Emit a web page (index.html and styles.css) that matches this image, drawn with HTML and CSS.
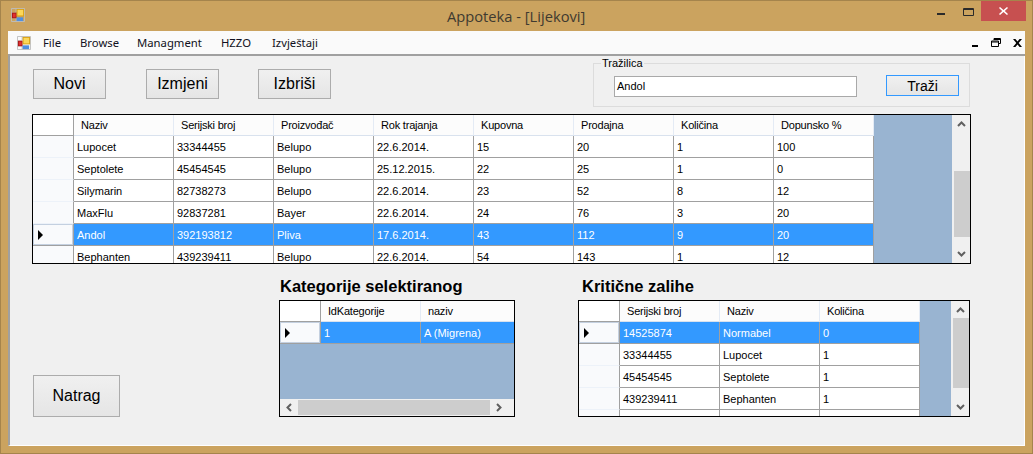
FILE: index.html
```html
<!DOCTYPE html>
<html lang="hr">
<head>
<meta charset="utf-8">
<title>Appoteka - [Lijekovi]</title>
<link rel="stylesheet" href="styles.css">
</head>
<body>
<div class="window">
  <header class="titlebar">
    <svg class="app-icon title-icon" width="14" height="14" viewBox="0 0 15 15"><use href="#appicon"/></svg>
    <div class="title">Appoteka - [Lijekovi]</div>
    <div class="win-controls">
      <svg class="wc-min" width="8" height="3" viewBox="0 0 8 3"><rect width="8" height="2" y="1" fill="#2a2a2a"/></svg>
      <svg class="wc-max" width="11" height="8" viewBox="0 0 11 8"><path d="M.5.5h10v7H.5z M.5 1.500h10" fill="none" stroke="#2a2a2a"/></svg>
      <div class="wc-close"><svg width="9" height="8" viewBox="0 0 9 8"><path d="M1 0l3.500 3L8 0l1 1-3.200 3L9 7 8 8 4.500 5 1 8 0 7l3.200-3L0 1z" fill="#fff"/></svg></div>
    </div>
  </header>
  <div class="mdi">
    <nav class="menubar">
      <svg class="app-icon menu-icon" width="14" height="14" viewBox="0 0 15 15">
        <g id="appicon">
          <path d="M.5.5h14v14H.5z M5.500.5v4 M.5 5.500h5 M5.500 10.500v4 M.5 10.500h5" fill="none" stroke="#bdbdbd"/>
          <rect x="1" y="5" width="5" height="6" fill="#a81818"/>
          <rect x="2" y="6" width="3" height="4" fill="#e03030"/>
          <rect x="6" y="1" width="8" height="8" fill="#d9a012"/>
          <rect x="7" y="2" width="6" height="6" fill="#fbd75a"/>
          <rect x="6" y="10" width="7" height="4" fill="#4f8fe0"/>
        </g>
      </svg>
      <span class="menu-item m-file">File</span>
      <span class="menu-item m-browse">Browse</span>
      <span class="menu-item m-manag">Managment</span>
      <span class="menu-item m-hzzo">HZZO</span>
      <span class="menu-item m-izv">Izvještaji</span>
      <div class="mdi-controls">
        <svg width="6" height="2" viewBox="0 0 6 2"><rect width="6" height="2"/></svg>
        <svg width="10" height="9" viewBox="0 0 10 9"><path d="M3 2V.5h6.500v5H8 M.5 3h7v5.500h-7z M.5 4h7 M3 1.500h6.500" fill="none" stroke="#000"/></svg>
        <svg width="9" height="8" viewBox="0 0 9 8"><path d="M0 0h2.400l2.100 2.600L6.600 0H9L5.700 4 9 8H6.600L4.500 5.400 2.400 8H0l3.300-4z"/></svg>
      </div>
    </nav>
    <main class="client">
      <section class="toolbar">
        <button class="btn btn-action">Novi</button>
        <button class="btn btn-action b2">Izmjeni</button>
        <button class="btn btn-action b3">Izbriši</button>
        <div class="search-group">
          <span class="legend">Tražilica</span>
          <div class="search-value">Andol</div>
          <button class="btn btn-search">Traži</button>
        </div>
      </section>

      <section class="grid grid-main">
        <div class="grid-body">
          <table>
            <thead><tr><th class="rh"></th><th>Naziv</th><th>Serijski broj</th><th>Proizvođač</th><th>Rok trajanja</th><th>Kupovna</th><th>Prodajna</th><th>Količina</th><th>Dopunsko %</th></tr></thead>
            <tbody>
              <tr><th class="rh"></th><td>Lupocet</td><td>33344455</td><td>Belupo</td><td>22.6.2014.</td><td>15</td><td>20</td><td>1</td><td>100</td></tr>
              <tr><th class="rh"></th><td>Septolete</td><td>45454545</td><td>Belupo</td><td>25.12.2015.</td><td>22</td><td>25</td><td>1</td><td>0</td></tr>
              <tr><th class="rh"></th><td>Silymarin</td><td>82738273</td><td>Belupo</td><td>22.6.2014.</td><td>23</td><td>52</td><td>8</td><td>12</td></tr>
              <tr><th class="rh"></th><td>MaxFlu</td><td>92837281</td><td>Bayer</td><td>22.6.2014.</td><td>24</td><td>76</td><td>3</td><td>20</td></tr>
              <tr class="sel"><th class="rh"><i class="caret"></i></th><td>Andol</td><td>392193812</td><td>Pliva</td><td>17.6.2014.</td><td>43</td><td>112</td><td>9</td><td>20</td></tr>
              <tr><th class="rh"></th><td>Bephanten</td><td>439239411</td><td>Belupo</td><td>22.6.2014.</td><td>54</td><td>143</td><td>1</td><td>12</td></tr>
            </tbody>
          </table>
        </div>
        <div class="vscroll">
          <svg class="arrow" width="9" height="6" viewBox="0 0 9 6"><path d="M1 5l3.500-3.500L8 5" fill="none" stroke="#606060" stroke-width="2"/></svg>
          <div class="vtrack"><div class="vthumb vthumb-main"></div></div>
          <svg class="arrow" width="9" height="6" viewBox="0 0 9 6"><path d="M1 1l3.500 3.500L8 1" fill="none" stroke="#606060" stroke-width="2"/></svg>
        </div>
      </section>

      <section class="bottom">
        <div class="back-col"><button class="btn btn-back">Natrag</button></div>
        <div class="cat-col">
          <h2>Kategorije selektiranog</h2>
          <div class="grid grid-cat">
            <div class="grid-col">
              <div class="grid-body">
                <table>
                  <thead><tr><th class="rh"></th><th>IdKategorije</th><th class="w95">naziv</th></tr></thead>
                  <tbody><tr class="sel"><th class="rh"><i class="caret"></i></th><td>1</td><td class="w95">A (Migrena)</td></tr></tbody>
                </table>
              </div>
              <div class="hscroll">
                <svg width="6" height="9" viewBox="0 0 6 9"><path d="M5 1L1.500 4.500 5 8" fill="none" stroke="#606060" stroke-width="2"/></svg>
                <div class="hthumb"></div>
                <svg width="6" height="9" viewBox="0 0 6 9"><path d="M1 1l3.500 3.500L1 8" fill="none" stroke="#606060" stroke-width="2"/></svg>
              </div>
            </div>
          </div>
        </div>
        <div class="crit-col">
          <h2>Kritične zalihe</h2>
          <div class="grid grid-crit">
            <div class="grid-body">
              <table>
                <thead><tr><th class="rh"></th><th>Serijski broj</th><th>Naziv</th><th>Količina</th></tr></thead>
                <tbody>
                  <tr class="sel"><th class="rh"><i class="caret"></i></th><td>14525874</td><td>Normabel</td><td>0</td></tr>
                  <tr><th class="rh"></th><td>33344455</td><td>Lupocet</td><td>1</td></tr>
                  <tr><th class="rh"></th><td>45454545</td><td>Septolete</td><td>1</td></tr>
                  <tr><th class="rh"></th><td>439239411</td><td>Bephanten</td><td>1</td></tr>
                  <tr><th class="rh"></th><td>238348288</td><td>Nemmax C</td><td>5</td></tr>
                </tbody>
              </table>
            </div>
            <div class="vscroll">
              <svg class="arrow" width="9" height="6" viewBox="0 0 9 6"><path d="M1 5l3.500-3.500L8 5" fill="none" stroke="#606060" stroke-width="2"/></svg>
              <div class="vtrack"><div class="vthumb vthumb-crit"></div></div>
              <svg class="arrow" width="9" height="6" viewBox="0 0 9 6"><path d="M1 1l3.500 3.500L8 1" fill="none" stroke="#606060" stroke-width="2"/></svg>
            </div>
          </div>
        </div>
      </section>
    </main>
  </div>
</div>
</body>
</html>
```

FILE: styles.css
```css
* { box-sizing: border-box; }
html, body { margin: 0; padding: 0; }
body { width: 1033px; height: 454px; overflow: hidden; font-family: "Liberation Sans", Arial, sans-serif; font-size: 11px; color: #000; }

.window { width: 1033px; height: 454px; background: #cba35f; border: 1px solid #a5844c; display: flex; flex-direction: column; }

.titlebar { height: 30px; flex: none; display: flex; position: relative; }
.title-icon { margin: 7px 0 0 10px; }
.title { position: absolute; left: 446px; top: 6px; font-family: "Open Sans", sans-serif; font-size: 14.7px; line-height: 18px; color: #3f3a30; }
.win-controls { margin-left: auto; display: flex; align-items: flex-start; margin-right: 6px; }
.wc-min { margin-top: 11px; }
.wc-max { margin: 7px 0 0 18px; }
.wc-close { width: 45px; height: 20px; margin-left: 7px; background: #c75050; display: flex; align-items: center; justify-content: center; }

.mdi { flex: 1; margin: 0 7px 7px; display: flex; flex-direction: column; min-height: 0; }

.menubar { height: 25px; flex: none; background: #fafafa; border-bottom: 2px solid #a0a0a0; display: flex; align-items: center; position: relative; }
.menu-icon { margin-left: 9px; }
.menu-item { font-family: "Noto Sans", sans-serif; font-size: 11.3px; color: #101020; position: absolute; top: 4px; line-height: 16px; }
.m-file { left: 35px; }
.m-browse { left: 72px; }
.m-manag { left: 129px; }
.m-hzzo { left: 213px; }
.m-izv { left: 264px; }
.mdi-controls { margin-left: auto; margin-right: 3px; width: 50px; display: flex; align-items: center; justify-content: space-between; }
.mdi-controls svg:first-child { margin-top: 7px; }

.client { flex: 1; background: #f0f0f0; border-left: 2px solid #a0a0a0; border-right: 1px solid #fff; border-bottom: 1px solid #fff; padding: 1px 0 0 22px; min-height: 0; }

.btn { font-family: "Liberation Sans", Arial, sans-serif; color: #000; padding: 0; border: 1px solid #acacac; background: linear-gradient(#f0f0f0, #e5e5e5); display: block; }

.toolbar { height: 57px; display: flex; align-items: flex-start; }
.btn-action { width: 73px; height: 30px; font-size: 16px; margin-top: 12px; margin-left: 1px; }
.b2 { margin-left: 40px; }
.b3 { margin-left: 39px; }

.search-group { position: relative; width: 377px; height: 44px; margin: 6px 0 0 262px; border: 1px solid #dcdcdc; display: flex; align-items: flex-start; }
.legend { position: absolute; left: 7px; top: -7px; background: #f0f0f0; padding: 0 1px; line-height: 13px; }
.search-value { width: 243px; height: 21px; margin: 12px 0 0 20px; background: #fff; border: 1px solid #a9a9a9; padding: 0 2px; line-height: 18px; }
.btn-search { width: 73px; height: 21px; margin: 11px 0 0 29px; border-color: #3399ff; font-size: 14px; }

.grid { border: 1px solid #000; background: #99b4d1; display: flex; overflow: hidden; }
.grid-main { width: 939px; height: 150px; }
.grid-cat { width: 236px; height: 117px; }
.grid-crit { width: 392px; height: 117px; }
.grid-body { flex: 1; min-width: 0; overflow: hidden; }
.grid-col { flex: 1; min-width: 0; display: flex; flex-direction: column; }

table { border-collapse: separate; border-spacing: 0; table-layout: fixed; width: max-content; }
th, td { font-weight: normal; text-align: left; padding: 0; overflow: hidden; white-space: nowrap; width: 100px; min-width: 100px; max-width: 100px; }
thead th { height: 21px; background: #fcfcfc; padding-left: 7px; letter-spacing: -0.2px; border-right: 1px solid #e4ebf5; border-bottom: 1px solid #d9e2ee; }
thead th.rh { background: #fff; border-right-color: #a0a0a0; border-bottom-color: #a0a0a0; }
td { height: 22px; background: #fff; padding-left: 3px; border-right: 1px solid #a0a0a0; border-bottom: 1px solid #a0a0a0; }
th.rh { width: 41px; min-width: 41px; max-width: 41px; padding: 0; }
tbody th.rh { background: #f9fafc; border-right: 1px solid #a0a0a0; border-bottom: 1px solid #edf2f9; }
th.w95, td.w95 { width: 95px; min-width: 95px; max-width: 95px; border-right: 0; }
.sel td { background: #3399ff; color: #fff; }
.sel th.rh { box-shadow: inset 0 0 0 1px #c4d0e0; border-right: 1px solid #a0a0a0; border-bottom: 1px solid #a0a0a0; padding-left: 5px; }
.caret { display: block; width: 0; height: 0; border-left: 5px solid #000; border-top: 5px solid transparent; border-bottom: 5px solid transparent; margin-left: 0; }

.vscroll { width: 18px; flex: none; background: #f0f0f0; border-left: 1px solid #f0f0f0; display: flex; flex-direction: column; align-items: center; }
.arrow { flex: none; margin: 6px 0; }
.vtrack { flex: 1; width: 16px; padding: 0; }
.vthumb { width: 16px; background: #cdcdcd; }
.vthumb-main { height: 66px; margin-top: 38px; }
.vthumb-crit { height: 70px; margin-top: -1px; }

.hscroll { height: 17px; flex: none; background: #f0f0f0; display: flex; align-items: center; padding: 0 5px 0 6px; }
.hthumb { width: 192px; height: 15px; margin: 0 6px 0 6px; background: #cdcdcd; }

.bottom { display: flex; align-items: flex-start; height: 154px; }
.back-col { width: 247px; padding: 111px 0 0 1px; }
.btn-back { width: 87px; height: 42px; font-size: 16px; }
.cat-col { width: 299px; }
.crit-col { width: 392px; }
h2 { margin: 0; height: 36px; padding: 13px 0 0 1px; font-size: 16.5px; line-height: 18px; font-weight: bold; }
.crit-col h2 { padding-left: 4px; }
```
